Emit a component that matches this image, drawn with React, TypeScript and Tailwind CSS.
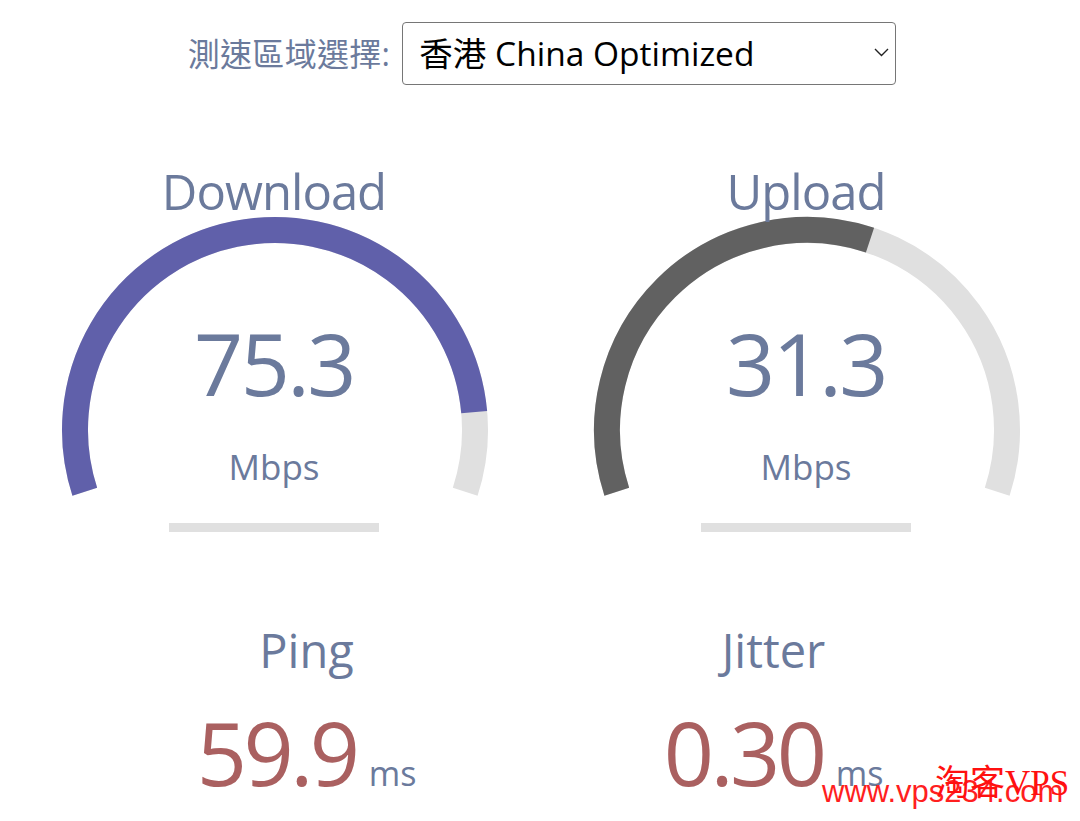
import React from "react";

// Speedtest result page: region picker, two gauges, ping / jitter.

const LABEL = "text-[#6b7a9c]";

// arc geometry (local svg coords)
const CX = 267;
const CY = 270;
const R = 200;
const START = 162;
const SPAN = 216;

function pt(deg: number) {
  const a = (deg * Math.PI) / 180;
  return [CX + R * Math.cos(a), CY + R * Math.sin(a)];
}

function arcPath(frac: number) {
  const [x0, y0] = pt(START);
  const sweep = SPAN * frac;
  const [x1, y1] = pt(START + sweep);
  return `M ${x0.toFixed(2)} ${y0.toFixed(2)} A ${R} ${R} 0 ${sweep > 180 ? 1 : 0} 1 ${x1.toFixed(2)} ${y1.toFixed(2)}`;
}

function Gauge({ title, value, amount, color }: { title: string; value: string; amount: number; color: string }) {
  return (
    <div className="relative flex flex-col items-center">
      <svg className="absolute left-0 top-0" width={532} height={372} viewBox="0 0 532 372">
        <path d={arcPath(1)} fill="none" stroke="#e0e0e0" strokeWidth={26} />
        <path d={arcPath(amount)} fill="none" stroke={color} strokeWidth={26} />
      </svg>
      <div className={`relative pt-[7px] text-[49px] leading-none tracking-[-0.02em] ${LABEL}`}>{title}</div>
      <div className={`relative mt-[104px] text-[86px] leading-none tracking-[-0.03em] ${LABEL}`}>{value}</div>
      <div className={`relative mt-[43px] text-[35px] leading-none ${LABEL}`}>Mbps</div>
      <div className="relative mt-[39px] h-[9px] w-[210px] bg-[#e0e0e0]" />
    </div>
  );
}

function Stat({ title, value }: { title: string; value: string }) {
  return (
    <div className="flex flex-col items-center">
      <div className={`text-[47px] leading-none ${LABEL}`}>{title}</div>
      <div className="mt-[34px] flex items-baseline gap-[12px]">
        <span className="text-[88px] leading-none tracking-[-0.04em] text-[#aa6060]">{value}</span>
        <span className={`text-[34px] leading-none ${LABEL}`}>ms</span>
      </div>
    </div>
  );
}

export default function App() {
  return (
    <div
      className="relative h-[821px] w-full overflow-hidden bg-white pt-[22px]"
      style={{ fontFamily: '"Open Sans", "Noto Sans CJK TC", sans-serif' }}
    >
      <div className="flex items-center justify-center gap-[12px] pl-[4px]">
        <span className={`text-[32px] leading-none tracking-[0.01em] ${LABEL}`}>測速區域選擇:</span>
        <div className="relative">
          <select
            className="h-[63px] w-[494px] appearance-none rounded-[4px] border border-[#767676] bg-white pl-[16px] text-[33.5px] text-black outline-none"
            defaultValue="hk"
          >
            <option value="hk">香港 China Optimized</option>
          </select>
          <svg className="pointer-events-none absolute right-[7px] top-[26px]" width="15" height="9" viewBox="0 0 15 9">
            <polyline points="1,1 7.5,7.5 14,1" fill="none" stroke="#222" strokeWidth="1.4" />
          </svg>
        </div>
      </div>

      <div className="mx-auto mt-[75px] grid w-[1064px] grid-cols-2">
        <Gauge title="Download" value="75.3" amount={0.893} color="#6060aa" />
        <Gauge title="Upload" value="31.3" amount={0.585} color="#616161" />
      </div>

      <div className="mx-auto mt-[95px] grid w-[934px] grid-cols-2">
        <Stat title="Ping" value="59.9" />
        <Stat title="Jitter" value="0.30" />
      </div>

      {/* watermark, overlapping as in the source */}
      <div
        className="absolute left-[822px] top-[776px] text-[31px] leading-none text-[#ff1f1f]"
        style={{ fontFamily: '"Liberation Sans", Arial, sans-serif' }}
      >
        www.vps234.com
      </div>
      <div
        className="absolute left-[935px] top-[766px] text-[35px] leading-none text-[#ff1010]"
        style={{ fontFamily: '"Liberation Serif", "Noto Sans CJK SC", serif' }}
      >
        淘客VPS
      </div>
    </div>
  );
}
